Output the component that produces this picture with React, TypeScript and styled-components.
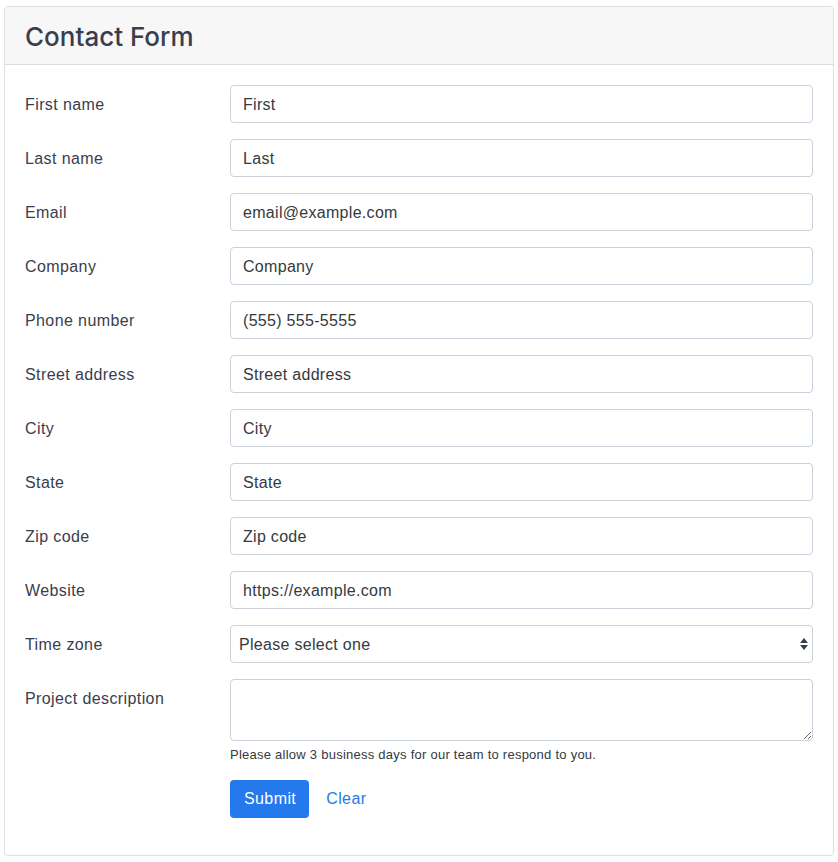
import React from "react";
import styled, { createGlobalStyle } from "styled-components";

const Global = createGlobalStyle`
  html, body { margin: 0; padding: 0; background: #fff; }
  body { font-family: "Liberation Sans", Arial, sans-serif; color: #343a40; }
  * { box-sizing: border-box; }
`;

const Page = styled.div`
  padding: 6px 4px 7px 4px;
`;

const Card = styled.div`
  border: 1px solid #dcdfe3;
  border-radius: 4px;
  background: #fff;
  overflow: hidden;
`;

const Header = styled.div`
  background: #f7f7f7;
  border-bottom: 1px solid #d8dde3;
  height: 58px;
  padding: 2px 20px 0 20px;
  display: flex;
  align-items: center;
`;

const Title = styled.h1`
  margin: 0;
  font-family: Inter, "Liberation Sans", Arial, sans-serif;
  font-size: 26px;
  font-weight: 500;
  color: #3a3d4d;
  letter-spacing: 0;
`;

const Body = styled.form`
  padding: 20px 20px 37px 20px;
  display: flex;
  flex-direction: column;
  gap: 16px;
`;

const Row = styled.div`
  display: grid;
  grid-template-columns: 205px 1fr;
  align-items: start;
`;

const Label = styled.label`
  font-size: 16px;
  color: #3a3d4d;
  height: 38px;
  padding-top: 2px;
  line-height: 36px;
  letter-spacing: 0.4px;
`;

const fieldBase = `
  width: 100%;
  border: 1px solid #c9d1da;
  border-radius: 4px;
  background: #fff;
  font-family: "Liberation Sans", Arial, sans-serif;
  font-size: 16px;
  color: #343a40;
  outline: none;
  letter-spacing: 0.3px;
`;

const Input = styled.input`
  ${fieldBase}
  height: 38px;
  padding: 1px 12px 0 12px;
  &::placeholder { color: #343a40; opacity: 1; }
`;

const SelectWrap = styled.div`
  position: relative;
`;

const Select = styled.select`
  ${fieldBase}
  height: 38px;
  padding: 1px 24px 0 8px;
  appearance: none;
  -webkit-appearance: none;
`;

const Arrows = styled.svg`
  position: absolute;
  right: 5px;
  top: 13px;
  pointer-events: none;
`;

const TextArea = styled.textarea`
  ${fieldBase}
  height: 62px;
  padding: 6px 12px;
  resize: vertical;
  display: block;
`;

const Help = styled.div`
  font-size: 13px;
  letter-spacing: 0.25px;
  color: #343a40;
  margin-top: 6px;
`;

const Actions = styled.div`
  display: flex;
  align-items: center;
  gap: 6px;
  margin-top: 18px;
`;

const SubmitButton = styled.button`
  height: 38px;
  padding: 0 13px 0 14px;
  background: #2479ec;
  color: #fff;
  border: none;
  border-radius: 4px;
  font-family: "Liberation Sans", Arial, sans-serif;
  font-size: 16px;
  font-weight: 500;
  letter-spacing: 0.4px;
`;

const ClearButton = styled.button`
  height: 38px;
  padding: 0 12px;
  margin-left: -1px;
  background: transparent;
  color: #2479ec;
  border: none;
  font-family: "Liberation Sans", Arial, sans-serif;
  font-size: 16px;
  letter-spacing: 0.4px;
`;

const fields: [string, string][] = [
  ["First name", "First"],
  ["Last name", "Last"],
  ["Email", "email@example.com"],
  ["Company", "Company"],
  ["Phone number", "(555) 555-5555"],
  ["Street address", "Street address"],
  ["City", "City"],
  ["State", "State"],
  ["Zip code", "Zip code"],
  ["Website", "https://example.com"],
];

export default function App() {
  return (
    <>
      <Global />
      <Page>
        <Card>
          <Header>
            <Title>Contact Form</Title>
          </Header>
          <Body onSubmit={(e) => e.preventDefault()}>
            {fields.map(([label, ph]) => (
              <Row key={label}>
                <Label>{label}</Label>
                <Input placeholder={ph} />
              </Row>
            ))}
            <Row>
              <Label>Time zone</Label>
              <SelectWrap>
                <Select defaultValue="">
                  <option value="">Please select one</option>
                </Select>
                <Arrows width="8" height="12" viewBox="0 0 8 12">
                  <path d="M4 0 L8 5 H0 Z" fill="#3a3d4d" />
                  <path d="M4 12 L8 7 H0 Z" fill="#3a3d4d" />
                </Arrows>
              </SelectWrap>
            </Row>
            <Row>
              <Label>Project description</Label>
              <div>
                <TextArea />
                <Help>Please allow 3 business days for our team to respond to you.</Help>
                <Actions>
                  <SubmitButton type="submit">Submit</SubmitButton>
                  <ClearButton type="button">Clear</ClearButton>
                </Actions>
              </div>
            </Row>
          </Body>
        </Card>
      </Page>
    </>
  );
}
